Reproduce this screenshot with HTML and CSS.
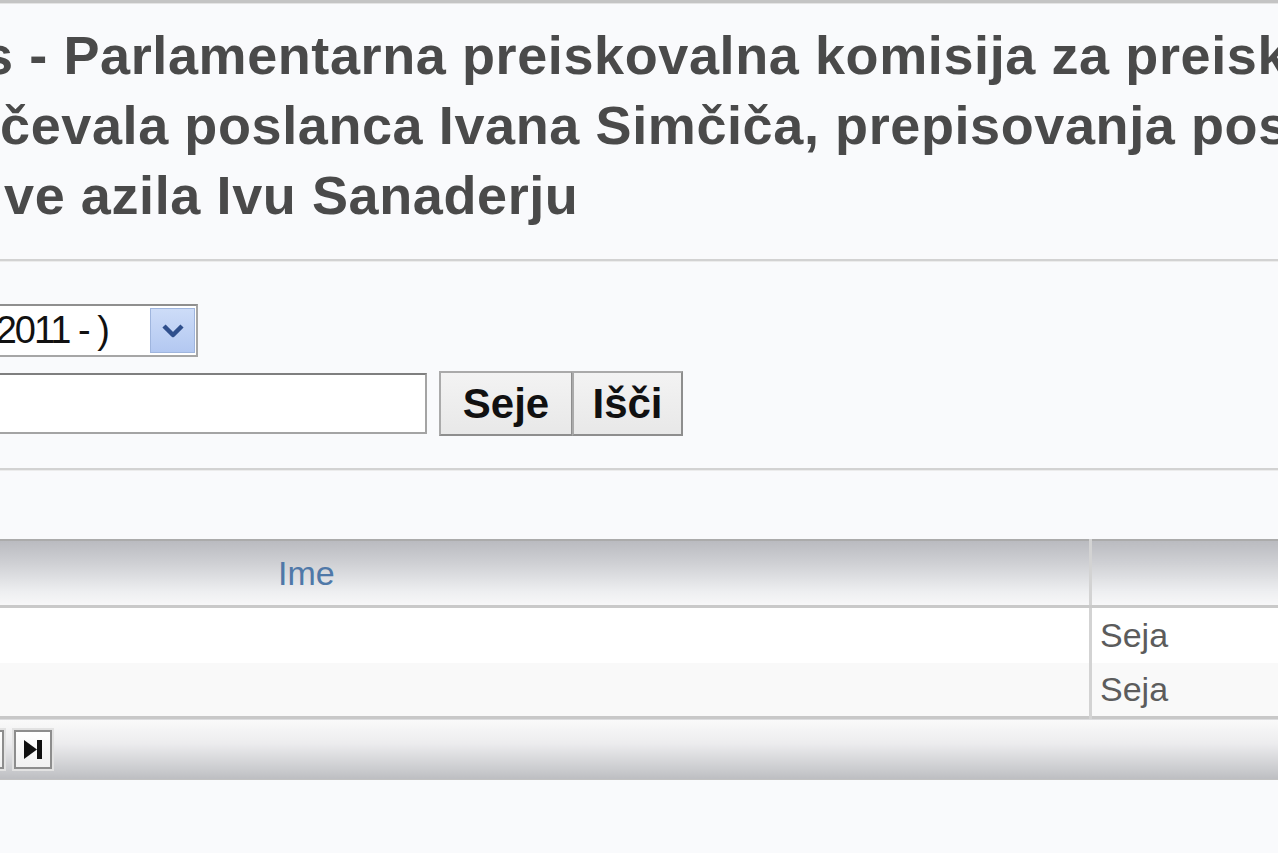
FILE: index.html
```html
<!DOCTYPE html>
<html lang="sl">
<head>
<meta charset="utf-8">
<title>Seje</title>
<link rel="stylesheet" href="styles.css">
</head>
<body>
<div class="page">
  <div class="topbar"></div>
  <h1 class="title">
    <span class="line l1">s - Parlamentarna preiskovalna komisija za preiskavo</span>
    <span class="line l2">čevala poslanca Ivana Simčiča, prepisovanja poslanskih</span>
    <span class="line l3">ve azila Ivu Sanaderju</span>
  </h1>
  <div class="sep sep-top"></div>
  <form class="filters">
    <div class="select">
      <span class="select-text">(2011 - )</span>
      <span class="select-btn">
        <svg width="24" height="16" viewBox="0 0 24 16"><path d="M3 3 L12 12 L21 3" fill="none" stroke="#2f4f8c" stroke-width="4.5" stroke-linejoin="round"/></svg>
      </span>
    </div>
    <div class="search-row">
      <input class="search-input" type="text" value="">
      <button type="button" class="btn">Seje</button>
      <button type="button" class="btn btn-right">Išči</button>
    </div>
  </form>
  <div class="sep sep-bottom"></div>
  <table class="grid">
    <thead>
      <tr>
        <th class="col-name"><a href="#" class="sort-link">Ime</a></th>
        <th class="col-type"></th>
      </tr>
    </thead>
    <tbody>
      <tr class="row">
        <td class="col-name"></td>
        <td class="col-type">Seja</td>
      </tr>
      <tr class="row row-alt">
        <td class="col-name"></td>
        <td class="col-type">Seja</td>
      </tr>
    </tbody>
    <tfoot>
      <tr>
        <td colspan="2" class="pager-cell">
          <div class="pager">
            <span class="pager-btn">
              <svg width="34" height="35" viewBox="0 0 34 35"><rect x="9" y="9" width="4" height="17" fill="#111"/><polygon points="25,9 25,26 13,17.5" fill="#111"/></svg>
            </span>
            <span class="pager-btn">
              <svg width="34" height="35" viewBox="0 0 34 35"><polygon points="8,8 8,27 21,17.5" fill="#111"/><rect x="21" y="8" width="5" height="19" fill="#111"/></svg>
            </span>
          </div>
        </td>
      </tr>
    </tfoot>
  </table>
</div>
</body>
</html>
```

FILE: styles.css
```css
html, body {
  margin: 0;
  padding: 0;
  background: #f9fafc;
}

.page {
  width: 1278px;
  height: 853px;
  overflow: hidden;
  background: #f9fafc;
  font-family: "Liberation Sans", Arial, sans-serif;
}

.topbar {
  height: 3px;
  background: #c4c4c4;
  border-bottom: 1px solid #e4e4e4;
}

.title {
  margin: 0;
  padding-top: 16px;
  font-size: 54px;
  line-height: 70px;
  font-weight: bold;
  letter-spacing: 0.6px;
  color: #4a4a4a;
  white-space: nowrap;
}

.line {
  display: block;
}

.l1 { margin-left: -17px; }
.l2 { margin-left: 0; }
.l3 { margin-left: 4px; }

.sep {
  height: 2px;
  background: #d2d2d2;
  border-bottom: 1px solid #ececec;
}

.sep-top { margin-top: 29px; }
.sep-bottom { margin-top: 32px; }

.filters {
  margin: 0;
  padding-top: 42px;
}

.select {
  box-sizing: border-box;
  width: 202px;
  height: 53px;
  margin-left: -4px;
  border: 2px solid #a6a6a6;
  border-top-color: #8f8f8f;
  background: #ffffff;
  display: flex;
  align-items: center;
  justify-content: space-between;
  padding-right: 1px;
  overflow: hidden;
}

.select-text {
  margin-left: -13px;
  font-size: 38px;
  letter-spacing: -2px;
  color: #111111;
  white-space: nowrap;
}

.select-btn {
  box-sizing: border-box;
  width: 45px;
  height: 45px;
  background: linear-gradient(#cddcf8, #b3c8f1);
  border: 1px solid #9fb5de;
  display: flex;
  align-items: center;
  justify-content: center;
}

.search-row {
  display: flex;
  align-items: center;
  margin-top: 14px;
  height: 65px;
}

.search-input {
  box-sizing: border-box;
  width: 440px;
  height: 61px;
  margin: 0 12px 0 -13px;
  border: 2px solid #a4a4a4;
  border-top-color: #7f7f7f;
  background: #ffffff;
  padding: 0;
}

.btn {
  box-sizing: border-box;
  height: 65px;
  width: 134px;
  margin: 0;
  padding: 0;
  background: linear-gradient(#f3f3f3, #e8e8e8);
  border: 2px solid #aaaaaa;
  border-right-color: #8e8e8e;
  border-bottom-color: #8e8e8e;
  font-family: "Liberation Sans", Arial, sans-serif;
  font-size: 42px;
  font-weight: bold;
  color: #111111;
}

.btn-right {
  width: 111px;
  margin-left: -1px;
}

.grid {
  margin-top: 68px;
  width: 1278px;
  border-collapse: collapse;
  table-layout: fixed;
}

.grid th,
.grid td {
  padding: 0;
}

.col-name {
  width: 1089px;
  border-right: 3px solid #d3d3d3;
}

.grid thead th {
  height: 64px;
  background: linear-gradient(#babbc0, #cfd0d4 35%, #eeeff1 80%, #f7f7f8);
  border-top: 2px solid #ababab;
  border-bottom: 3px solid #c9c9c9;
  text-align: left;
  font-weight: normal;
  font-size: 34px;
}

.sort-link {
  display: inline-block;
  padding-left: 278px;
  color: #4f78a8;
  text-decoration: none;
}

.row td {
  height: 55px;
  background: #ffffff;
  font-size: 34px;
  color: #5c5c5c;
}

.row-alt td {
  height: 53px;
  background: #f9f9f9;
}

.col-type {
  padding-left: 8px !important;
}

.pager-cell {
  height: 60px;
  border-top: 3px solid #c8c8c8;
  border-bottom: 1px solid #c2c2c2;
  background: linear-gradient(#fafafa, #ececee 40%, #c9cacd 85%, #bcbdc1);
}

.pager {
  display: flex;
  gap: 10px;
  margin-left: -34px;
  align-items: center;
}

.pager-btn {
  box-sizing: border-box;
  width: 38px;
  height: 39px;
  background: linear-gradient(#ffffff, #f1f1f1);
  border: 2px solid #8d8d8d;
  box-shadow: 0 0 0 2px #e2e2e2;
  display: flex;
}
```
